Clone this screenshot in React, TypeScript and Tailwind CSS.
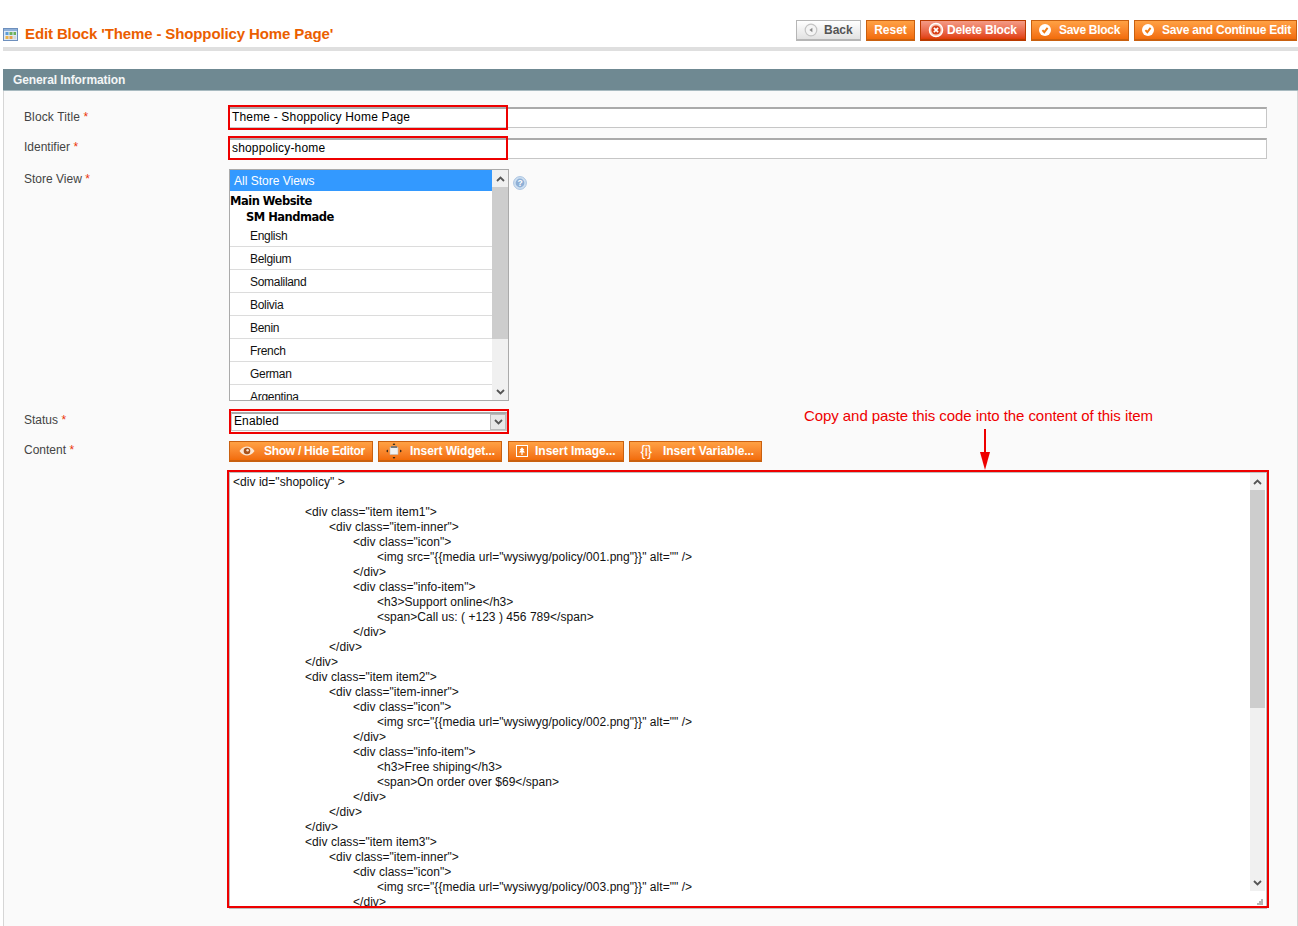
import type { ReactNode } from 'react';

type Tone = 'orange' | 'red' | 'grey';

const TONES: Record<Tone, string> = {
  orange: 'border-[#c9600f] bg-gradient-to-b from-[#ffa143] to-[#f26c08] text-white',
  red: 'border-[#b93a00] bg-gradient-to-b from-[#f49a85] to-[#e03c00] text-white',
  grey: 'border-[#b6b6b6] bg-gradient-to-b from-white to-[#e2e2e2] text-[#555]',
};

const STORES = ['English', 'Belgium', 'Somaliland', 'Bolivia', 'Benin', 'French', 'German', 'Argentina'];

const INDENT = ['pl-0', 'pl-[72px]', 'pl-[96px]', 'pl-[120px]', 'pl-[144px]'];

function itemLines(n: number, title: string, sub: string): [number, string][] {
  return [
    [1, `<div class="item item${n}">`],
    [2, '<div class="item-inner">'],
    [3, '<div class="icon">'],
    [4, `<img src="{{media url="wysiwyg/policy/00${n}.png"}}" alt="" />`],
    [3, '</div>'],
    [3, '<div class="info-item">'],
    [4, `<h3>${title}</h3>`],
    [4, `<span>${sub}</span>`],
    [3, '</div>'],
    [2, '</div>'],
    [1, '</div>'],
  ];
}

const CODE: [number, string][] = [
  [0, '<div id="shopolicy" >'],
  [0, ' '],
  ...itemLines(1, 'Support online', 'Call us: ( +123 ) 456 789'),
  ...itemLines(2, 'Free shiping', 'On order over $69'),
  ...itemLines(3, '', '').slice(0, 5),
];

function CheckIcon() {
  return (
    <svg width="14" height="14" viewBox="0 0 14 14" className="shrink-0">
      <circle cx="7" cy="7" r="6" fill="#fff" />
      <path d="M4.4 7.2 6.3 9.2 9.6 4.9" fill="none" stroke="#f07a12" strokeWidth="1.9" />
    </svg>
  );
}

function BackIcon() {
  return (
    <svg width="14" height="14" viewBox="0 0 14 14" className="shrink-0">
      <circle cx="7" cy="7" r="5.8" fill="#f4f4f4" stroke="#c4c4c4" strokeWidth="1.2" />
      <path d="M8.4 4.8v4.4L5.4 7z" fill="#8a8a8a" />
    </svg>
  );
}

function DeleteIcon() {
  return (
    <svg width="16" height="16" viewBox="0 0 16 16" className="shrink-0">
      <circle cx="8" cy="8" r="6.6" fill="#f7c9b8" stroke="#fff" strokeWidth="1.3" />
      <circle cx="8" cy="8" r="4.6" fill="#d9401a" />
      <path d="M5.9 5.9l4.2 4.2M10.1 5.9l-4.2 4.2" stroke="#fff" strokeWidth="1.7" />
    </svg>
  );
}

function EyeIcon() {
  return (
    <svg width="16" height="10" viewBox="0 0 16 10" className="shrink-0">
      <path d="M0.5 5C3 1.6 5.4 0.5 8 0.5S13 1.6 15.5 5C13 8.4 10.6 9.5 8 9.5S3 8.4 0.5 5z" fill="#fbe6d2" />
      <circle cx="8" cy="5" r="3.3" fill="#a8521a" />
      <circle cx="8.6" cy="4.3" r="1.2" fill="#fbe6d2" />
    </svg>
  );
}

function WidgetIcon() {
  return (
    <svg width="16" height="16" viewBox="0 0 16 16" className="shrink-0">
      <rect x="4" y="4.5" width="8" height="7" fill="#f1f1f1" stroke="#bbb" strokeWidth="0.6" />
      <rect x="5" y="3" width="6" height="2" fill="#777" />
      <path d="M8 0l1.4 2H6.6zM8 16l-1.4-2h2.8zM0 8l2-1.4v2.8zM16 8l-2 1.4V6.6z" fill="#3a2a1a" />
    </svg>
  );
}

function ImageIcon() {
  return (
    <svg width="12" height="12" viewBox="0 0 12 12" className="shrink-0">
      <rect x="0.5" y="0.5" width="11" height="11" fill="#f27c1c" stroke="#fff" />
      <path d="M6 2.2 3.6 5h1.2L3 7.6h2.4V10h1.2V7.6H9L7.2 5h1.2z" fill="#fff" />
    </svg>
  );
}

function Button({ tone = 'orange', icon, children, className }: { tone?: Tone; icon?: ReactNode; children: ReactNode; className: string }) {
  return (
    <button className={`flex h-[21px] items-center border border-b-2 text-[12px] leading-none font-bold whitespace-nowrap ${TONES[tone]} ${className}`}>
      {icon}
      {children}
    </button>
  );
}

function Scrollbar({ thumb, track }: { thumb: string; track: string }) {
  return (
    <div className={`flex shrink-0 flex-col bg-[#f0f0f0] ${track}`}>
      <div className="flex h-[17px] shrink-0 items-center justify-center">
        <svg width="9" height="6" viewBox="0 0 9 6"><path d="M1 5l3.5-3.5L8 5" fill="none" stroke="#555" strokeWidth="1.8" /></svg>
      </div>
      <div className={`shrink-0 bg-[#cdcdcd] ${thumb}`} />
      <div className="flex-1" />
      <div className="flex h-[17px] shrink-0 items-center justify-center">
        <svg width="9" height="6" viewBox="0 0 9 6"><path d="M1 1l3.5 3.5L8 1" fill="none" stroke="#555" strokeWidth="1.8" /></svg>
      </div>
    </div>
  );
}

function Label({ children, className }: { children: string; className: string }) {
  return (
    <div className={`pl-[20px] text-[12px] leading-[15px] text-[#444] ${className}`}>
      {children} <span className="text-[#eb340a]">*</span>
    </div>
  );
}

function TextRow({ value, redHeight }: { value: string; redHeight: string }) {
  return (
    <div className="relative h-[21px] w-[1038px] border border-t-2 border-[#c6c6c6] border-t-[#aaa] bg-white pl-[2px] text-[12px] leading-[16px] tracking-[0.17px] text-black">
      {value}
      <div className={`absolute -top-[4px] -left-[2px] w-[280px] border-2 border-[#ee0000] ${redHeight}`} />
    </div>
  );
}

export default function App() {
  return (
    <div className="relative flex h-[926px] w-[1298px] flex-col overflow-hidden bg-white pl-[3px] font-['Liberation_Sans',Arial,sans-serif]">
      {/* page head */}
      <div className="flex h-[51px] shrink-0 items-start justify-between border-b-4 border-[#dfdfdf] pt-[20px]">
        <div className="flex items-center gap-[7px] pt-[5px]">
          <svg width="15" height="13" viewBox="0 0 15 13">
            <rect x="0.5" y="0.5" width="14" height="12" fill="#dfe9f5" stroke="#6d8fbd" />
            <rect x="1" y="1" width="13" height="2" fill="#8fb0d8" />
            <rect x="2.5" y="4" width="3" height="3" fill="#5b9bd5" />
            <rect x="6.5" y="4" width="3" height="3" fill="#6cb05a" />
            <rect x="10.5" y="4" width="2.5" height="3" fill="#6cb05a" />
            <rect x="2.5" y="8" width="3" height="3" fill="#e9b44c" />
            <rect x="6.5" y="8" width="3" height="3" fill="#e9a04c" />
            <rect x="10.5" y="8" width="2.5" height="3" fill="#d9d9d9" />
          </svg>
          <h1 className="text-[15px] leading-[18px] font-bold tracking-[-0.12px] text-[#eb5e00]">Edit Block 'Theme - Shoppolicy Home Page'</h1>
        </div>
        <div className="flex gap-[5px] pr-px">
          <Button tone="grey" icon={<BackIcon />} className="w-[65px] gap-[6px] pl-[7px]">Back</Button>
          <Button className="w-[49px] justify-center">Reset</Button>
          <Button tone="red" icon={<DeleteIcon />} className="w-[106px] gap-[3px] pl-[7px] tracking-[-0.2px]">Delete Block</Button>
          <Button icon={<CheckIcon />} className="w-[98px] gap-[7px] pl-[6px] tracking-[-0.3px]">Save Block</Button>
          <Button icon={<CheckIcon />} className="w-[163px] gap-[7px] pl-[6px] tracking-[-0.23px]">Save and Continue Edit</Button>
        </div>
      </div>

      {/* section */}
      <div className="mt-[18px] h-[22px] shrink-0 border-b border-[#a8bac0] bg-[#6f8992] pl-[10px] text-[12px] leading-[23px] font-bold tracking-[-0.1px] text-[#f4f6f7]">
        General Information
      </div>
      <div className="relative grid flex-1 grid-cols-[225px_1fr] content-start border-x border-[#d6d6d6] bg-[#fafafa] pt-[16px]">
        <Label className="mt-[3px] tracking-[0.12px]">Block Title</Label>
        <TextRow value="Theme - Shoppolicy Home Page" redHeight="h-[25px]" />

        <Label className="mt-[12px]">Identifier</Label>
        <div className="mt-[10px]"><TextRow value="shoppolicy-home" redHeight="h-[24px]" /></div>

        <Label className="mt-[13px]">Store View</Label>
        <div className="mt-[10px] flex items-start gap-[4px]">
          <div className="flex h-[232px] w-[280px] overflow-hidden border border-[#aaa] bg-white">
            <div className="min-w-0 flex-1 overflow-hidden">
              <div className="h-[21px] bg-[#3399ff] pl-[4px] text-[12px] leading-[23px] text-white">All Store Views</div>
              <div className="h-[33px] pt-[2px] font-['DejaVu_Sans',sans-serif] text-[11.5px] leading-[16px] font-bold tracking-[-0.5px] text-black">
                <div>Main Website</div>
                <div className="pl-[16px]">SM Handmade</div>
              </div>
              {STORES.map((s) => (
                <div key={s} className="h-[23px] border-b border-[#dcdcdc] pl-[20px] text-[12px] leading-[25px] tracking-[-0.3px] text-[#111]">{s}</div>
              ))}
            </div>
            <Scrollbar thumb="h-[152px]" track="w-[16px]" />
          </div>
          <svg width="14" height="14" viewBox="0 0 14 14" className="mt-[7px]">
            <circle cx="7" cy="7" r="6.4" fill="#cfe0f2" stroke="#a9c3e0" />
            <circle cx="7" cy="7" r="4.4" fill="#8fb0d6" />
            <text x="7" y="10" textAnchor="middle" fontSize="8.5" fontWeight="700" fill="#fff" fontFamily="Liberation Sans">?</text>
          </svg>
        </div>

        <Label className="mt-[12px]">Status</Label>
        <div className="relative mt-[11px] ml-[2px] flex h-[19px] w-[276px] items-stretch border border-t-2 border-[#c6c6c6] border-t-[#aaa] bg-white">
          <div className="flex-1 pl-[2px] text-[12px] leading-[15px] tracking-[0.1px] text-black">Enabled</div>
          <div className="flex w-[16px] items-center justify-center border border-[#bbb] bg-[#e8e8e8]">
            <svg width="9" height="6" viewBox="0 0 9 6"><path d="M1 1l3.5 3.5L8 1" fill="none" stroke="#555" strokeWidth="1.8" /></svg>
          </div>
          <div className="absolute -top-[5px] -left-[3px] h-[25px] w-[280px] border-2 border-[#ee0000]" />
        </div>

        <Label className="mt-[12px]">Content</Label>
        <div className="mt-[10px] flex">
          <Button icon={<EyeIcon />} className="w-[144px] gap-[9px] pl-[9px] tracking-[-0.28px]">Show / Hide Editor</Button>
          <Button icon={<WidgetIcon />} className="ml-[5px] w-[124px] gap-[8px] pl-[7px] tracking-[-0.05px]">Insert Widget...</Button>
          <Button icon={<ImageIcon />} className="ml-[6px] w-[116px] gap-[7px] pl-[7px]">Insert Image...</Button>
          <Button
            icon={<span className="w-[18px] shrink-0 text-center text-[14px] font-normal tracking-[-0.5px]">{'{i}'}</span>}
            className="ml-[5px] w-[133px] gap-[8px] pl-[7px] tracking-[-0.05px]"
          >
            Insert Variable...
          </Button>
        </div>

        <div />
        <div className="relative mt-[10px] flex h-[437px] w-[1038px] border border-[#bdbdbd] bg-white">
          <div className="min-w-0 flex-1 overflow-hidden pt-[2px] pl-[3px] text-[12px] leading-[15px] tracking-[0.04px] text-[#111]">
            {CODE.map(([level, text], i) => (
              <div key={i} className={`whitespace-pre ${INDENT[level]}`}>{text}</div>
            ))}
          </div>
          <div className="flex w-[16px] shrink-0 flex-col">
            <Scrollbar thumb="h-[218px]" track="h-[418px] w-[15px]" />
            <div className="flex flex-1 items-end justify-end pr-[3px] pb-[3px]">
              <svg width="6" height="6" viewBox="0 0 6 6" fill="#b5b5b5">
                <rect x="4" y="0" width="2" height="2" /><rect x="2" y="2" width="2" height="2" /><rect x="4" y="2" width="2" height="2" />
                <rect x="0" y="4" width="2" height="2" /><rect x="2" y="4" width="2" height="2" /><rect x="4" y="4" width="2" height="2" />
              </svg>
            </div>
          </div>
          <div className="absolute -top-[3px] -right-[3px] -bottom-[0px] -left-[3px] border-2 border-[#ee0000]" />
        </div>

        {/* red annotation laid over the form */}
        <div className="absolute top-[316px] left-[800px] text-[15px] leading-[18px] tracking-[-0.07px] whitespace-nowrap text-[#ee0000]">
          Copy and paste this code into the content of this item
        </div>
        <svg width="12" height="42" viewBox="0 0 12 42" className="absolute top-[338px] left-[975px]">
          <path d="M6 0v24" stroke="#ee0000" strokeWidth="2" />
          <path d="M1 23h10L6 41z" fill="#ee0000" />
        </svg>
      </div>
    </div>
  );
}
